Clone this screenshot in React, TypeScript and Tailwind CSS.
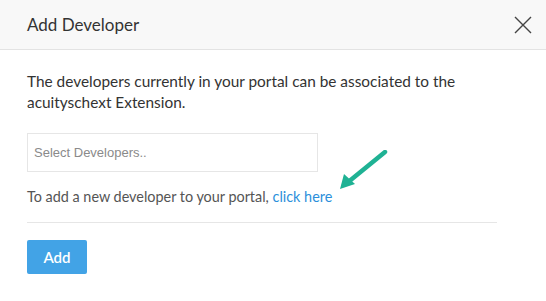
export default function App() {
  return (
    <div className="w-[546px] h-[301px] bg-white font-['Lato',sans-serif] text-[#333]">
      <div className="h-[50px] bg-[#f8f8f8] border-b border-[#e3e3e3] flex items-center justify-between pl-[27px] pr-[13px]">
        <h1 className="text-[17px] text-[#333]">Add Developer</h1>
        <svg width="20" height="20" viewBox="0 0 20 20" className="text-[#444]">
          <path d="M2 2 L18 18 M18 2 L2 18" stroke="currentColor" strokeWidth="1.4" fill="none" />
        </svg>
      </div>
      <div className="px-[27px] pt-[21px]">
        <p className="text-[15.4px] leading-[21px] text-[#333] w-[450px]">
          The developers currently in your portal can be associated to the acuityschext Extension.
        </p>
        <div className="relative mt-[20px]">
          <div className="w-[291px] h-[39px] border border-[#e6e6e6] flex items-center pl-[6px] text-[13px] text-[#8a8a8a] font-['Liberation_Sans',sans-serif]">
            Select Developers..
          </div>
          <svg
            className="absolute left-[306px] top-[17px]"
            width="60"
            height="45"
            viewBox="0 0 60 45"
          >
            <path d="M52 2 L14 33" stroke="#1fb294" strokeWidth="4.5" strokeLinecap="round" fill="none" />
            <path d="M7 39 L11 24 L22 34 Z" fill="#1fb294" />
          </svg>
        </div>
        <p className="mt-[14px] text-[14.4px] leading-[21px] text-[#555]">
          To add a new developer to your portal, <span className="text-[#2b8fdb]">click here</span>
        </p>
        <div className="mt-[15px] border-t border-[#e6e6e6] w-[470px]" />
        <button className="mt-[17px] w-[60px] h-[34px] rounded-[2px] bg-[#42a3e6] text-white text-[15px] font-semibold">
          Add
        </button>
      </div>
    </div>
  );
}
